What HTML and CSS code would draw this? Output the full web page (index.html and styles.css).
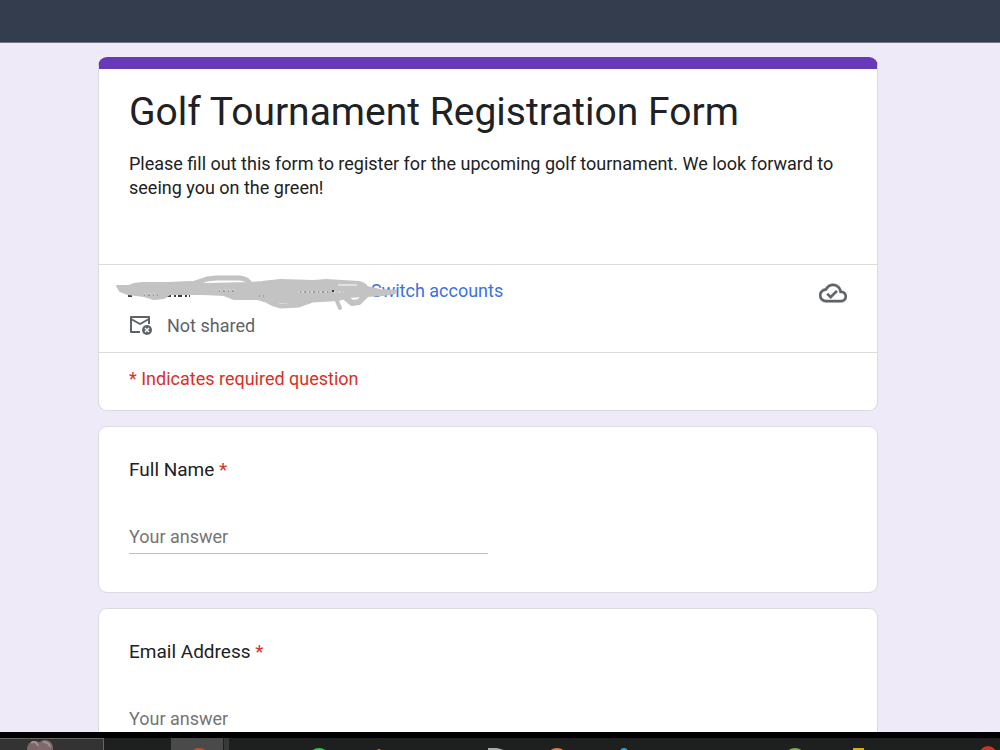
FILE: index.html
```
<!DOCTYPE html>
<html lang="en">
<head>
    <meta charset="UTF-8">
    <meta name="viewport" content="width=device-width, initial-scale=1.0">
    <title>Golf Tournament Registration Form</title>
    <link rel="stylesheet" href="styles.css">
</head>
<body>

    <header class="top-bar"></header>

    <main class="page">
        <form class="form">
            <!-- Form header -->
            <section class="card card-header">
                <div class="intro">
                    <h1>Golf Tournament Registration Form</h1>
                    <p>Please fill out this form to register for the upcoming golf tournament. We look forward to seeing you on the green!</p>
                </div>
                <div class="account">
                    <div class="account-info">
                        <div class="account-row">
                            <span class="account-email">
                                <svg class="scribble" viewBox="0 0 284 42" aria-hidden="true">
                                    <path fill="none" stroke="#3c4043" stroke-width="2" stroke-dasharray="4 3 2 2" d="M12 22 H18 M51 22 H74 M245 14 H250"/>
                                    <path fill="#c3c3c3" stroke="#c3c3c3" stroke-width="2" stroke-linejoin="round" d="M1 12 L13 12 L18 10 L27 9 L52 9 L74 8 L90 10 L134 9 L146 8 L164 6 L198 7 L210 6 L243 8 Q249 9 251 13 L264 16 L280 17 L279 19 L268 21 L250 22 L232 23 L222 26 L205 27 L188 28 L170 28 L157 28 L148 27 L142 25 L118 25 L108 21 L88 20 L54 20 L48 24 L38 25 L28 22 L12 20 L4 17 Z"/>
                                    <g fill="none" stroke="#c3c3c3" stroke-linecap="round" stroke-linejoin="round">
                                        <path stroke-width="5" d="M76 10 L91 5 L100 4 L124 4 Q132 5 134 10"/>
                                        <path stroke-width="5" d="M150 26 Q158 31 165 32 L183 31 L194 27"/>
                                        <path stroke-width="6" d="M230 24 L236 29 L243 28 L251 20"/>
                                        <path stroke-width="4" d="M221 27 L224 34"/>
                                    </g>
                                    <path fill="none" stroke="#fff" d="M222 11 H241"/>
                                    <path fill="none" stroke="#e0e0e0" stroke-dasharray="2 2 3 2" d="M28 20 H42 M103 16 H121 M182 18 H212 M218 18 H228"/>
                                    <path fill="none" stroke="#777" stroke-dasharray="1 3 2 3" d="M28 21 H42 M103 17 H121 M143 22 H148 M184 18 H212"/>
                                    <path fill="none" stroke="#3c4043" stroke-width="2" d="M216 17 H218"/>
                                </svg>
                            </span>
                            <a href="#" class="switch-link">Switch accounts</a>
                        </div>
                        <div class="shared-row">
                            <svg class="mail-icon" viewBox="0 0 24 22" aria-hidden="true">
                                <path fill="none" stroke="#5f6368" stroke-width="2" stroke-linejoin="round" d="M11 17 H2 V2 H20 V9 M2 4 L11 9 L20 4"/>
                                <circle cx="18" cy="15" r="5" fill="#5f6368"/>
                                <path stroke="#fff" stroke-width="1.4" d="M16 13 L20 17 M20 13 L16 17"/>
                            </svg>
                            <span>Not shared</span>
                        </div>
                    </div>
                    <svg class="cloud-icon" viewBox="0 0 24 24" role="img" aria-label="Draft saved">
                        <path fill="#5f6368" stroke="#5f6368" stroke-width="0.4" d="M19.35 10.04C18.67 6.59 15.64 4 12 4 9.11 4 6.6 5.64 5.35 8.04 2.34 8.36 0 10.91 0 14c0 3.31 2.69 6 6 6h13c2.76 0 5-2.24 5-5 0-2.64-2.05-4.78-4.65-4.96zM19 18H6c-2.21 0-4-1.79-4-4 0-2.05 1.53-3.76 3.56-3.97l1.07-.11.5-.95C8.08 7.14 9.94 6 12 6c2.62 0 4.88 1.86 5.39 4.43l.3 1.5 1.53.11c1.56.1 2.78 1.41 2.78 2.96 0 1.65-1.35 3-3 3zm-9-3.820l-2.090-2.090L6.500 13.500 10 17l6.010-6.010-1.410-1.410z"/>
                    </svg>
                </div>
                <p class="required-note">* Indicates required question</p>
            </section>

            <!-- Questions -->
            <section class="card question">
                <label for="full-name">Full Name <span class="star">*</span></label>
                <input type="text" id="full-name" placeholder="Your answer" required>
            </section>

            <section class="card question">
                <label for="email">Email Address <span class="star">*</span></label>
                <input type="email" id="email" placeholder="Your answer" required>
            </section>
        </form>
    </main>

    <!-- Taskbar -->
    <footer class="taskbar">
        <svg viewBox="0 0 1000 12" preserveAspectRatio="xMinYMin slice" aria-hidden="true">
            <rect x="-1" y="0.500" width="104.500" height="14" fill="#333" stroke="#666"/>
            <circle cx="35" cy="11" r="8" fill="#7b6666"/>
            <circle cx="45" cy="10" r="8" fill="#7f6a6b"/>
            <path d="M31 5 Q36 2 38 8 M43 4 Q49 4 50 9" stroke="#a39190" stroke-width="2" fill="none"/>
            <rect x="171" width="52" height="12" fill="#4a4a4a"/>
            <rect x="224" width="5" height="12" fill="#383838"/>
            <circle cx="199" cy="21" r="11" fill="#dc4030"/>
            <circle cx="319" cy="21" r="11" fill="#25c663"/>
            <circle cx="379" cy="13" r="2" fill="#d87924"/>
            <path d="M488 10 L497 10 L504 12 L488 12 Z" fill="#aaa"/>
            <circle cx="557" cy="21" r="11" fill="#e87942"/>
            <circle cx="624" cy="14" r="4" fill="#2aa5dc"/>
            <circle cx="795" cy="21" r="11" fill="#80ad48"/>
            <rect x="853" y="10" width="11" height="2" fill="#e2a514"/>
            <circle cx="988" cy="17" r="9" fill="#cf3023"/>
        </svg>
    </footer>

</body>
</html>
```
FILE: styles.css
```
* {
    margin: 0;
    padding: 0;
    box-sizing: border-box;
}

body {
    font-family: Roboto, Arial, sans-serif;
    font-size: 18px;
    line-height: 24px;
    color: #202124;
    background-color: #eeeaf7;
    display: flex;
    flex-direction: column;
    height: 100vh;
    overflow: hidden;
}

.top-bar {
    flex: none;
    height: 43px;
    background-color: #343d4e;
    border-bottom: 1px solid #747684;
}

.page {
    flex: 1;
    min-height: 0;
    overflow: hidden;
    padding: 14px 24px 0 0;
}

.form {
    width: 80%;
    max-width: 780px;
    margin: 0 auto;
    display: flex;
    flex-direction: column;
    gap: 15px;
}

/* Cards */
.card {
    background-color: #fff;
    border: 1px solid #dadce0;
    border-radius: 9px;
}

.card-header {
    border-top: 12px solid #673ab7;
}

.intro {
    padding: 19px 30px 64px;
}

h1 {
    font-size: 39px;
    font-weight: 400;
    line-height: 48px;
    margin-bottom: 16px;
}

.account {
    display: flex;
    justify-content: space-between;
    padding: 14px 30px;
    border-top: 1px solid #dadce0;
    border-bottom: 1px solid #dadce0;
}

.account-row {
    display: flex;
}

.account-email {
    position: relative;
    width: 242px;
}

/* Scribble that hides the e-mail, runs over the start of the link */
.scribble {
    position: absolute;
    left: -13px;
    top: -5px;
    width: 284px;
    height: 42px;
    pointer-events: none;
    z-index: 1;
}

.switch-link {
    color: #3b72dc;
    text-decoration: none;
}

.shared-row {
    display: flex;
    align-items: center;
    gap: 14px;
    margin-top: 11px;
    color: #5f6368;
}

.mail-icon {
    width: 24px;
    height: 22px;
}

.cloud-icon {
    width: 28px;
    height: 28px;
}

.required-note {
    padding: 14px 30px 19px;
    color: #d93025;
}

.question {
    display: flex;
    flex-direction: column;
    padding: 31px 30px 38px;
}

.question label {
    font-size: 19px;
}

.star {
    color: #d93025;
}

.question input {
    width: 50%;
    margin-top: 43px;
    padding-bottom: 4px;
    border: none;
    border-bottom: 1px solid #bdbdbd;
    outline: none;
    background: transparent;
    font: inherit;
    color: #202124;
}

.question input::placeholder {
    color: #757575;
}

.question input:focus {
    border-bottom-color: #673ab7;
}

.taskbar {
    flex: none;
    height: 18px;
    border-top: 6px solid #000;
    background-color: #1e1f1f;
    overflow: hidden;
}

.taskbar svg {
    display: block;
    width: 100%;
    height: 12px;
}
```
